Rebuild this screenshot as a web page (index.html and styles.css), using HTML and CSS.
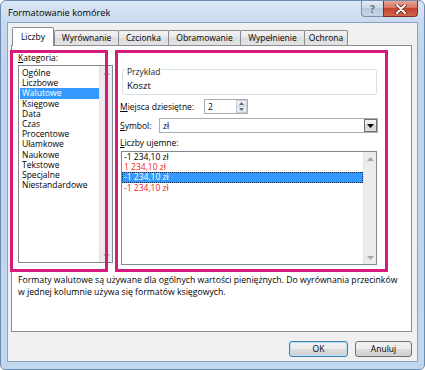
FILE: index.html
```html
<!DOCTYPE html>
<html lang="pl">
<head>
<meta charset="utf-8">
<title>Formatowanie komórek</title>
<link rel="stylesheet" href="styles.css">
</head>
<body>
<div class="window">
  <div class="titlebar">
    <span class="title">Formatowanie komórek</span>
    <div class="caption-btns">
      <div class="cbtn help">?</div>
      <div class="cbtn close">
        <svg width="12" height="10" viewBox="0 0 12 10"><path d="M2 1 L10 9 M10 1 L2 9" stroke="#5a1a14" stroke-width="3.4" stroke-linecap="round"/><path d="M2 1 L10 9 M10 1 L2 9" stroke="#ffffff" stroke-width="2" stroke-linecap="round"/></svg>
      </div>
    </div>
  </div>
  <div class="client">
    <div class="tabs">
      <div class="tab active t-liczby">Liczby</div>
      <div class="tab t-wyr">Wyrównanie</div>
      <div class="tab t-czc">Czcionka</div>
      <div class="tab t-obr">Obramowanie</div>
      <div class="tab t-wyp">Wypełnienie</div>
      <div class="tab t-och">Ochrona</div>
    </div>
    <div class="panel">
      <div class="cols">
        <div class="leftcol">
          <div class="label"><u>K</u>ategoria:</div>
          <div class="listbox cat">
            <div class="items">
              <div class="item">Ogólne</div>
              <div class="item">Liczbowe</div>
              <div class="item sel">Walutowe</div>
              <div class="item">Księgowe</div>
              <div class="item">Data</div>
              <div class="item">Czas</div>
              <div class="item">Procentowe</div>
              <div class="item">Ułamkowe</div>
              <div class="item">Naukowe</div>
              <div class="item">Tekstowe</div>
              <div class="item">Specjalne</div>
              <div class="item">Niestandardowe</div>
            </div>
            <div class="sb">
              <div class="sb-arrow"><svg width="7" height="4" viewBox="0 0 7 4"><path d="M0 4 L3.5 0 L7 4Z" fill="#a8a8a8"/></svg></div>
              <div class="sb-arrow"><svg width="7" height="4" viewBox="0 0 7 4"><path d="M0 0 L3.5 4 L7 0Z" fill="#a8a8a8"/></svg></div>
            </div>
          </div>
        </div>
        <div class="rightcol">
          <div class="group">
            <div class="legend">Przykład</div>
            <div class="sample">Koszt</div>
          </div>
          <div class="row">
            <span class="label w-miejsca"><u>M</u>iejsca dziesiętne:</span>
            <div class="spin">
              <span class="spin-val">2</span>
              <div class="spin-btns">
                <div class="spin-b"><svg width="5" height="3" viewBox="0 0 5 3"><path d="M0 3 L2.5 0 L5 3Z" fill="#5a6a80"/></svg></div>
                <div class="spin-b"><svg width="5" height="3" viewBox="0 0 5 3"><path d="M0 0 L2.5 3 L5 0Z" fill="#5a6a80"/></svg></div>
              </div>
            </div>
          </div>
          <div class="row">
            <span class="label w-symbol"><u>S</u>ymbol:</span>
            <div class="combo">
              <span class="combo-val">zł</span>
              <div class="combo-btn"><svg width="7" height="4" viewBox="0 0 7 4"><path d="M0 0 L3.5 4 L7 0Z" fill="#000"/></svg></div>
            </div>
          </div>
          <div class="label neg-label"><u>L</u>iczby ujemne:</div>
          <div class="listbox neg">
            <div class="items">
              <div class="item">-1 234,10 zł</div>
              <div class="item red">1 234,10 zł</div>
              <div class="item sel focus">-1 234,10 zł</div>
              <div class="item red">-1 234,10 zł</div>
            </div>
            <div class="sb">
              <div class="sb-arrow"><svg width="7" height="4" viewBox="0 0 7 4"><path d="M0 4 L3.5 0 L7 4Z" fill="#a8a8a8"/></svg></div>
              <div class="sb-arrow"><svg width="7" height="4" viewBox="0 0 7 4"><path d="M0 0 L3.5 4 L7 0Z" fill="#a8a8a8"/></svg></div>
            </div>
          </div>
        </div>
      </div>
      <p class="desc">Formaty walutowe są używane dla ogólnych wartości pieniężnych. Do wyrównania przecinków w jednej kolumnie używa się formatów księgowych.</p>
    </div>
    <div class="buttons">
      <div class="btn default">OK</div>
      <div class="btn cancel">Anuluj</div>
    </div>
  </div>
  <div class="callout c-left"></div>
  <div class="callout c-right"></div>
</div>
</body>
</html>
```
FILE: styles.css
```css
* { box-sizing: border-box; }
html, body { margin: 0; padding: 0; }
body {
  width: 425px;
  height: 370px;
  overflow: hidden;
  background: #ffffff;
  font-family: "Open Sans", "Noto Sans", sans-serif;
  font-size: 8.5px;
  color: #000;
}
.window {
  position: relative;
  width: 425px;
  height: 370px;
  border: 1px solid #6e8bb0;
  border-radius: 6px 6px 5px 5px;
  background: linear-gradient(#dae6f5 0px, #c8daef 21px, #bfd4ec 60px, #c2d6ed 100%);
  display: flex;
  flex-direction: column;
}
.titlebar {
  height: 21px;
  display: flex;
  justify-content: space-between;
  align-items: flex-start;
  padding-left: 7px;
  padding-right: 6px;
}
.title {
  font-size: 9.2px;
  line-height: 12px;
  margin-top: 6px;
}
.caption-btns { display: flex; }
.cbtn {
  height: 16px;
  display: flex;
  align-items: center;
  justify-content: center;
  border: 1px solid #7d8ea6;
  border-top: none;
}
.help {
  width: 22px;
  border-radius: 0 0 0 4px;
  border-right: none;
  background: linear-gradient(#e4ebf4, #cad6e5 50%, #b9c8db 50%, #c7d4e4);
  color: #5c6f88;
  font-size: 10px;
  font-weight: bold;
}
.close {
  width: 35px;
  border-color: #7a2f28;
  border-radius: 0 0 4px 0;
  background: linear-gradient(#e8a597, #d7735f 45%, #c5442d 50%, #d0654d);
}
.client {
  margin-left: 6px;
  width: 411px;
  height: 340px;
  border: 1px solid #8ba3c0;
  background: #f0f0f0;
}
.tabs {
  display: flex;
  align-items: flex-end;
  height: 22px;
  padding-left: 4px;
}
.tab {
  height: 15px;
  line-height: 14px;
  padding: 0;
  text-align: center;
  border: 1px solid #898c95;
  border-bottom: none;
  margin-left: -1px;
  background: linear-gradient(#f3f3f3, #e6e6e6 50%, #dcdcdc 50%, #e3e3e3);
  border-radius: 2px 2px 0 0;
  white-space: nowrap;
}
.tab.active {
  position: relative;
  z-index: 1;
  height: 19px;
  line-height: 17px;
  margin-left: 0;
  margin-bottom: -1px;
  margin-right: 1px;
  background: #ffffff;
}
.t-liczby { width: 42px; }
.t-wyr { width: 65px; }
.t-czc { width: 51px; }
.t-obr { width: 73px; }
.t-wyp { width: 65px; }
.t-och { width: 44px; }
.panel {
  margin-left: 3px;
  width: 401px;
  height: 287px;
  border: 1px solid #898c95;
  background: #ffffff;
  padding: 6px 0 0 6px;
}
.cols {
  display: flex;
  gap: 7px;
}
.leftcol { width: 95px; }
.label {
  line-height: 12px;
  white-space: nowrap;
}
.listbox {
  display: flex;
  border: 1px solid #828790;
  background: #fff;
}
.listbox .items { flex: 1; }
.cat {
  margin-top: 1px;
  height: 198px;
  padding: 2px 0 0 1px;
}
.item {
  line-height: 10.2px;
  height: 10.2px;
  padding-left: 2px;
  white-space: nowrap;
}
.item.sel { background: #3399ff; color: #fff; }
.item.red { color: #ee1c1c; }
.item.focus { outline: 1px dotted #0b2e5c; outline-offset: -1px; }
.sb {
  width: 13px;
  background: #ececec;
  border-left: 1px solid #e2e2e2;
  display: flex;
  flex-direction: column;
  justify-content: space-between;
}
.cat .sb { margin-top: -2px; }
.sb-arrow {
  height: 13px;
  display: flex;
  align-items: center;
  justify-content: center;
}
.rightcol {
  width: 258px;
  padding-top: 17px;
}
.group {
  margin-left: 2px;
  width: 255px;
  height: 26px;
  border: 1px solid #d5dfe5;
  border-radius: 3px;
}
.legend {
  width: fit-content;
  margin: -3px 0 0 3px;
  padding: 0 1px;
  line-height: 10px;
  background: #fff;
  color: #1e1e1e;
}
.sample {
  margin-top: 3px;
  padding-left: 4px;
  line-height: 11px;
  font-size: 9.5px;
}
.row {
  display: flex;
  align-items: center;
  margin-top: 4px;
  height: 15px;
}
.w-miejsca { width: 84px; }
.w-symbol { width: 39px; }
.spin {
  width: 44px;
  height: 15px;
  border: 1px solid #abadb3;
  display: flex;
  background: #fff;
}
.spin-val { flex: 1; padding-left: 3px; line-height: 13px; }
.spin-btns {
  width: 11px;
  display: flex;
  flex-direction: column;
}
.spin-b {
  flex: 1;
  display: flex;
  align-items: center;
  justify-content: center;
  background: linear-gradient(#f4f6f9, #dde4ec);
  border: 1px solid #c6ced8;
}
.spin-b + .spin-b { border-top: none; }
.combo {
  width: 219px;
  height: 15px;
  border: 1px solid #abadb3;
  background: #fff;
  display: flex;
}
.combo-val { flex: 1; padding-left: 3px; line-height: 13px; }
.combo-btn {
  width: 13px;
  display: flex;
  align-items: center;
  justify-content: center;
  border: 1px solid #707070;
  background: linear-gradient(#f2f2f2, #e4e4e4 50%, #d5d5d5 50%, #dedede);
}
.neg-label { margin-top: 4px; }
.neg {
  margin-top: 2px;
  margin-left: 1px;
  width: 256px;
  height: 114px;
}
.desc {
  margin: 10px 0 0 0;
  width: 384px;
  font-size: 8.7px;
  line-height: 11.5px;
}
.buttons {
  display: flex;
  justify-content: flex-end;
  gap: 7px;
  margin-top: 9px;
  padding-right: 5px;
}
.btn {
  height: 16px;
  line-height: 14px;
  text-align: center;
  border: 1px solid #707070;
  border-radius: 3px;
  background: linear-gradient(#f2f2f2, #ebebeb 50%, #dddddd 50%, #cfcfcf);
}
.btn.default {
  width: 59px;
  border-color: #3c7fb1;
  box-shadow: inset 0 0 0 1px #b9e0f7;
}
.btn.cancel { width: 57px; }
.callout {
  position: absolute;
  top: 49px;
  height: 222px;
  border: 3px solid #d5197d;
}
.c-left { left: 9px; width: 98px; }
.c-right { left: 114px; width: 273px; }
```
